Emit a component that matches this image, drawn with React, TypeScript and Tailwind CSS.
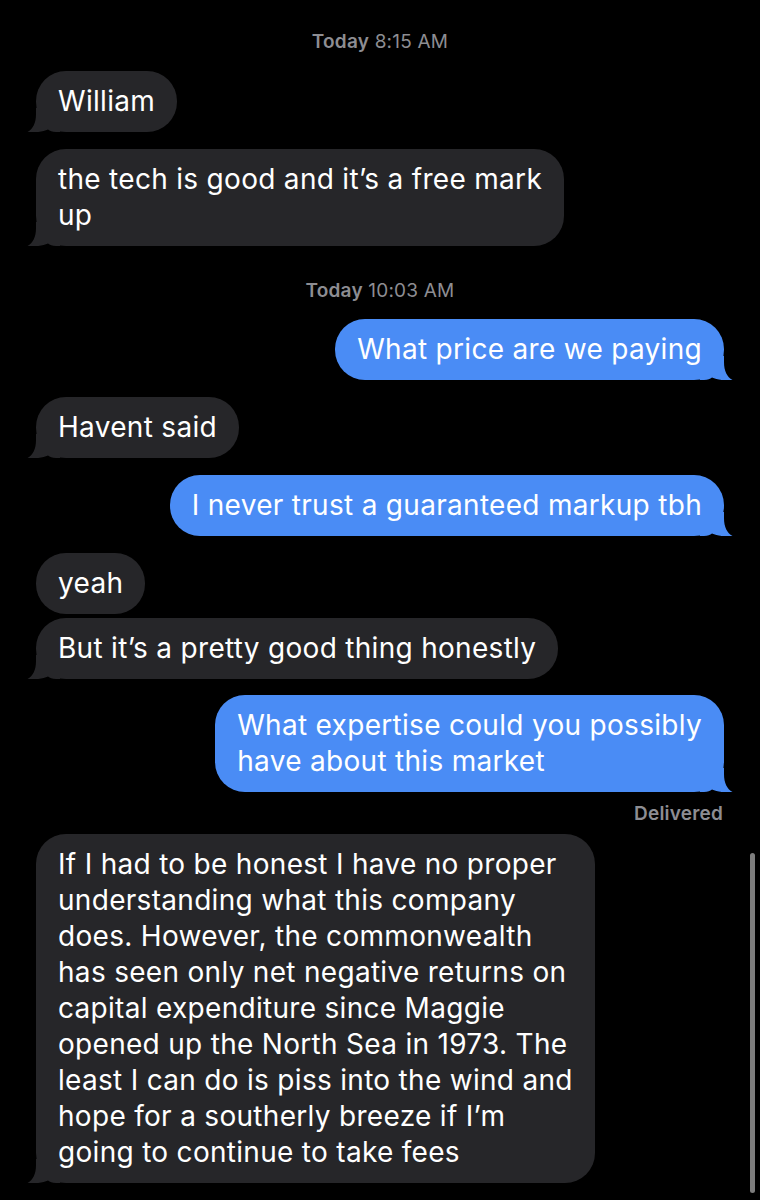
import React from "react";

const FONT = { fontFamily: "Inter, 'Noto Sans', sans-serif" };

function Tail({ side, color }: { side: "left" | "right"; color: string }) {
  return (
    <svg
      width="36"
      height="24"
      viewBox="0 0 36 24"
      className={
        side === "left"
          ? "absolute left-[-10px] bottom-0"
          : "absolute right-[-10px] bottom-0 -scale-x-100"
      }
    >
      <path
        d="M10,0 L34,0 L34,24 L30,24 C26,24 24,23.2 22,21.6 C17,24 10,24.6 1.5,24 C7,21 10,15 10,6 Z"
        fill={color}
      />
    </svg>
  );
}

function Bubble({
  lines,
  side,
  tail,
  className = "",
}: {
  lines: string[];
  side: "left" | "right";
  tail?: boolean;
  className?: string;
}) {
  const gray = side === "left";
  const color = gray ? "#262629" : "#4a8cf5";
  return (
    <div className={`flex ${gray ? "justify-start" : "justify-end"} ${className}`}>
      <div
        className={`relative w-fit rounded-[30px] px-[22px] pt-[12px] pb-[13px] text-[28px] leading-[36px] text-white tracking-[0.3px] ${
          gray ? "bg-[#262629]" : "bg-[#4a8cf5]"
        }`}
      >
        {tail && <Tail side={side} color={color} />}
        <div className="relative">
          {lines.map((l, i) => (
            <div key={i} className="whitespace-nowrap">
              {l}
            </div>
          ))}
        </div>
      </div>
    </div>
  );
}

function Stamp({ day, time, className = "" }: { day: string; time: string; className?: string }) {
  return (
    <div className={`text-center text-[19px] leading-[22px] tracking-[0.2px] text-[#8d8d92] ${className}`}>
      <span className="font-semibold">{day}</span> <span>{time}</span>
    </div>
  );
}

export default function App() {
  return (
    <div className="relative w-[760px] h-[1200px] bg-black overflow-hidden" style={FONT}>
      <div className="flex flex-col pl-[36px] pr-[36px]">
        <Stamp day="Today" time="8:15 AM" className="mt-[31px]" />
        <Bubble side="left" tail lines={["William"]} className="mt-[18px]" />
        <Bubble
          side="left"
          tail
          lines={["the tech is good and it\u2019s a free mark", "up"]}
          className="mt-[17px]"
        />
        <Stamp day="Today" time="10:03 AM" className="mt-[34px]" />
        <Bubble side="right" tail lines={["What price are we paying"]} className="mt-[17px]" />
        <Bubble side="left" tail lines={["Havent said"]} className="mt-[17px]" />
        <Bubble side="right" tail lines={["I never trust a guaranteed markup tbh"]} className="mt-[17px]" />
        <Bubble side="left" lines={["yeah"]} className="mt-[17px]" />
        <Bubble side="left" tail lines={["But it\u2019s a pretty good thing honestly"]} className="mt-[4px]" />
        <Bubble
          side="right"
          tail
          lines={["What expertise could you possibly", "have about this market"]}
          className="mt-[16px]"
        />
        <div className="mt-[11px] text-right text-[19px] leading-[22px] tracking-[0.2px] font-semibold text-[#8d8d92] pr-[1px]">
          Delivered
        </div>
        <Bubble
          side="left"
          tail
          lines={[
            "If I had to be honest I have no proper",
            "understanding what this company",
            "does. However, the commonwealth",
            "has seen only net negative returns on",
            "capital expenditure since Maggie",
            "opened up the North Sea in 1973. The",
            "least I can do is piss into the wind and",
            "hope for a southerly breeze if I\u2019m",
            "going to continue to take fees",
          ]}
          className="mt-[9px]"
        />
      </div>
      <div className="absolute left-[750px] top-[853px] w-[5px] h-[340px] rounded-full bg-[#7d7d7d]" />
    </div>
  );
}
